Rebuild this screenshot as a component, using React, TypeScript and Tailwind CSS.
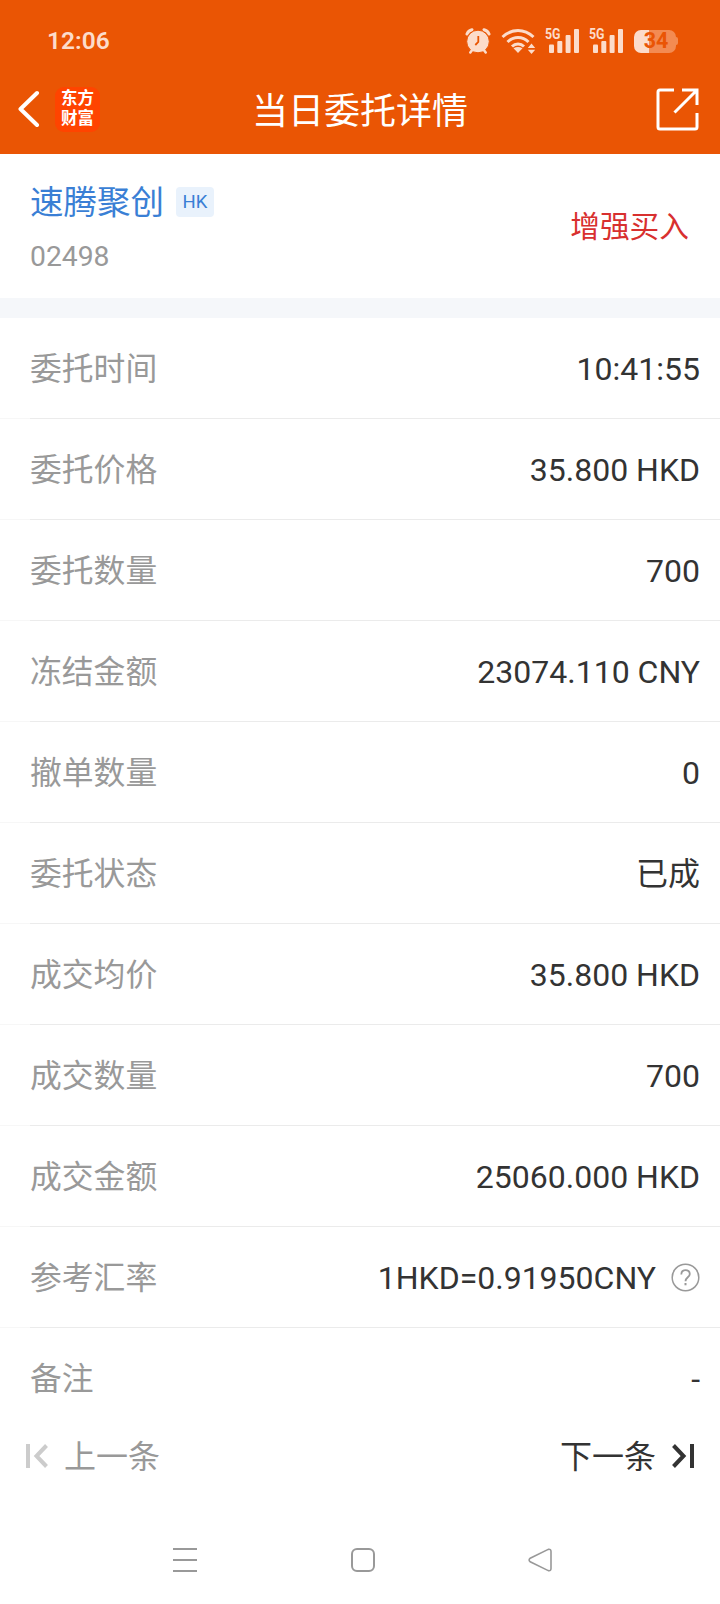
import * as React from 'react';

interface DetailRow {
  label: string;
  value: string;
  help?: boolean;
}

const ROWS: DetailRow[] = [
  { label: '委托时间', value: '10:41:55' },
  { label: '委托价格', value: '35.800 HKD' },
  { label: '委托数量', value: '700' },
  { label: '冻结金额', value: '23074.110 CNY' },
  { label: '撤单数量', value: '0' },
  { label: '委托状态', value: '已成' },
  { label: '成交均价', value: '35.800 HKD' },
  { label: '成交数量', value: '700' },
  { label: '成交金额', value: '25060.000 HKD' },
  { label: '参考汇率', value: '1HKD=0.91950CNY', help: true },
  { label: '备注', value: '-' },
];

/** Cellular signal with the network type over the short bars */
function SignalIcon() {
  return (
    <svg className="overflow-visible" width="36" height="26" viewBox="0 0 36 26" fill="#fcdccb">
      <text
        x="0"
        y="11"
        fontSize="14"
        fontWeight="700"
        fontFamily="Roboto, sans-serif"
        textLength="15.5"
        lengthAdjust="spacingAndGlyphs"
      >
        5G
      </text>
      <rect x="4" y="16.5" width="5" height="8.500" rx="1" />
      <rect x="12.300" y="13" width="5" height="12" rx="1" />
      <rect x="20.600" y="7" width="5" height="18" rx="1" />
      <rect x="29" y="1" width="5" height="24" rx="1" />
    </svg>
  );
}

function StatusBar() {
  return (
    <div className="flex h-20 items-center justify-between pl-[47px] pr-[42px] pt-0.5 text-[#fcdccb]">
      <span className="text-[24.500px] font-semibold leading-none">12:06</span>
      <div className="flex items-center">
        {/* Alarm */}
        <svg width="26" height="26" viewBox="0 0 26 26" fill="none" stroke="#fcdccb">
          <path d="M2 6Q3.300 2.600 7 1.700M24 6Q22.700 2.600 19 1.700" strokeWidth="3" strokeLinecap="round" />
          <circle cx="13" cy="13.500" r="11.300" fill="#fcdccb" stroke="#ea5504" strokeWidth="1" />
          <path d="M7.500 21.500L5.300 24.500M18.500 21.500L20.700 24.500" strokeWidth="2.500" strokeLinecap="round" />
          <path d="M13.300 8V14L10.300 17" stroke="#ea5504" strokeWidth="1.800" />
        </svg>
        {/* Wi-Fi */}
        <svg className="ml-[10px]" width="35" height="26" viewBox="0 0 35 26" fill="none" stroke="#fcdccb">
          <path d="M1.500 9Q8.500 2.500 17 2.500T32.500 9" strokeWidth="3" />
          <path d="M6.500 14Q11 9.500 17 9.500T27.500 14" strokeWidth="3" />
          <path d="M11 18.500Q13.500 16 17 16T23 18.500" strokeWidth="3" />
          <path d="M12.500 20.300Q17 17.800 21.500 20.300L17 25Z" fill="#fcdccb" stroke="none" />
          <path d="M26.800 20L30.500 15.500L34.200 20ZM26.800 21.700L30.500 26L34.200 21.700Z" fill="#fcdccb" stroke="none" />
        </svg>
        <div className="ml-[9px]">
          <SignalIcon />
        </div>
        <div className="ml-[8px]">
          <SignalIcon />
        </div>
        {/* Battery */}
        <div className="ml-[9px] flex items-center">
          <div className="flex h-[23px] w-[42px] items-center justify-center rounded-[7px] bg-linear-to-r from-[#fcdccb] from-36% to-[#f38b52] to-36% pl-0.5 text-[21.500px] font-bold leading-none text-[#ea5504]">
            34
          </div>
          <div className="h-2 w-0.5 rounded-r-sm bg-[#f38b52]" />
        </div>
      </div>
    </div>
  );
}

function TitleBar() {
  return (
    <div className="grid h-[74px] grid-cols-[1fr_auto_1fr] items-center pb-4 text-white">
      <div className="flex items-center pl-[18px]">
        <svg width="22" height="38" viewBox="0 0 22 38" fill="none" stroke="#fff" strokeWidth="4" strokeLinecap="round" strokeLinejoin="round">
          <path d="M19 3L2.500 19L19 35" />
        </svg>
        <div className="ml-[15px] flex h-[45px] w-[45px] flex-col items-center justify-center rounded-[9px] bg-[#ff4400] pb-px text-[16.500px] font-bold leading-[19.500px]">
          <span>东方</span>
          <span>财富</span>
        </div>
      </div>
      <h1 className="pt-1.5 text-[36px] leading-none">当日委托详情</h1>
      <div className="flex justify-end pr-[21px]">
        <svg width="43" height="43" viewBox="0 0 43 43" fill="none" stroke="#fff" strokeWidth="3">
          <path d="M18 2H4Q2 2 2 4V39Q2 41 4 41H39Q41 41 41 39V25" />
          <path d="M26 2H41V17M41 2L18.500 24.500" />
        </svg>
      </div>
    </div>
  );
}

function StockSummary() {
  return (
    <section className="flex h-36 items-start justify-between pl-[30px] pr-[31px]">
      <div className="pt-[30px]">
        <div className="flex items-center">
          <span className="text-[33.500px] leading-[38px] text-[#3a7fd5]">速腾聚创</span>
          <span className="mb-0.5 ml-3 flex h-[30px] w-[38px] items-center justify-center rounded bg-[#e9f2fc] pt-0.5 text-[18.500px] text-[#3a7fd5]">
            HK
          </span>
        </div>
        <div className="mt-[19px] text-[28.300px] leading-8 text-[#999]">02498</div>
      </div>
      <div className="mt-[55px] text-[29.700px] leading-9 text-[#d8302f]">增强买入</div>
    </section>
  );
}

function DetailItem({ row, last }: { row: DetailRow; last: boolean }) {
  return (
    <div>
      <div className="flex h-[100px] items-center justify-between pl-[30px] pr-5 text-[32px] leading-none">
        <span className="pt-1 text-[31.800px] text-[#999]">{row.label}</span>
        <span className="flex items-center text-[#333]">
          <span className="pt-0.5">{row.value}</span>
          {row.help && (
            <svg className="ml-[15px]" width="29" height="29" viewBox="0 0 29 29" fill="none" stroke="#999" strokeWidth="1.500">
              <circle cx="14.500" cy="14.500" r="13.300" />
              <path d="M10.300 11.500C10.300 5.500 18.800 5.800 18.800 11C18.800 14.300 14.500 14.300 14.500 18.200" strokeWidth="1.800" />
              <path d="M14.500 20V22.300" strokeWidth="2" />
            </svg>
          )}
        </span>
      </div>
      {!last && (
        <div className="flex h-px">
          <div className="w-[30px] bg-[#f7f7f7]" />
          <div className="flex-1 bg-[#ebebeb]" />
        </div>
      )}
    </div>
  );
}

function Pager() {
  return (
    <div className="flex h-14 items-center justify-between px-[26px] text-[32px] leading-none">
      <button className="flex items-center text-[#999]">
        <svg width="22" height="24" viewBox="0 0 22 24" fill="none" stroke="#ccc" strokeWidth="4">
          <path d="M2 0V24M20.500 1.500L10.500 12L20.500 22.500" />
        </svg>
        <span className="ml-4 pt-0.5">上一条</span>
      </button>
      <button className="flex items-center text-[#333]">
        <span className="mr-4 pt-0.5">下一条</span>
        <svg width="22" height="24" viewBox="0 0 22 24" fill="none" stroke="#333" strokeWidth="4">
          <path d="M20 0V24M1.500 1.500L11.500 12L1.500 22.500" />
        </svg>
      </button>
    </div>
  );
}

/** System navigation: recents, home, back */
function NavBar() {
  return (
    <nav className="flex h-[88px] items-center justify-between pl-[173px] pr-[168px]">
      <svg width="24" height="26" viewBox="0 0 24 26" stroke="#999" strokeWidth="2">
        <path d="M0 2H24M0 13H24M0 24H24" />
      </svg>
      <svg width="26" height="26" viewBox="0 0 26 26" fill="none" stroke="#999" strokeWidth="2">
        <rect x="2" y="2" width="22" height="22" rx="5" />
      </svg>
      <svg width="24" height="24" viewBox="0 0 24 24" fill="none" stroke="#999" strokeWidth="1.600">
        <path d="M20.200 1.400L2.200 10.200Q0 12 2.200 13.800L20.200 22.600Q23 23.200 23 20.500V3.500Q23 0.800 20.200 1.400Z" />
      </svg>
    </nav>
  );
}

export default function App() {
  return (
    <div className="flex h-[1604px] w-[720px] flex-col overflow-hidden bg-white font-[Roboto,'Noto_Sans_CJK_SC',sans-serif]">
      <header className="h-[154px] bg-[#ea5504]">
        <StatusBar />
        <TitleBar />
      </header>
      <StockSummary />
      <div className="h-5 bg-[#f5f7fa]" />
      <main>
        {ROWS.map((row, i) => (
          <DetailItem key={row.label} row={row} last={i === ROWS.length - 1} />
        ))}
      </main>
      <Pager />
      <div className="flex-1" />
      <NavBar />
    </div>
  );
}
